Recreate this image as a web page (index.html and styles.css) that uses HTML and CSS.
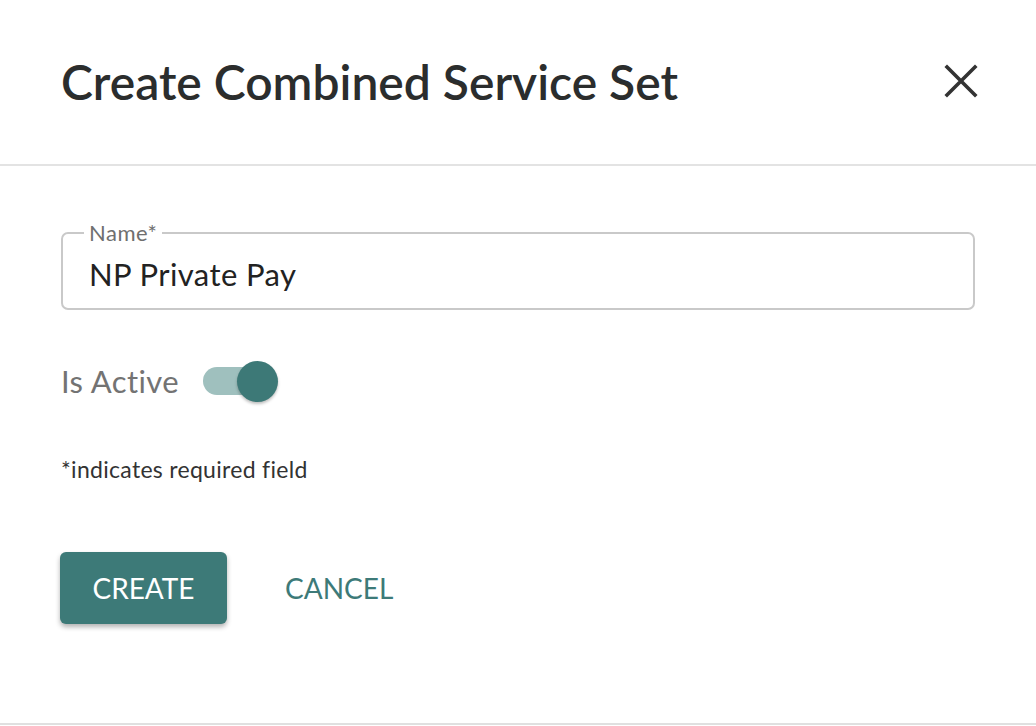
FILE: index.html
```html
<!DOCTYPE html>
<html>
<head>
<meta charset="utf-8">
<link rel="stylesheet" href="styles.css">
</head>
<body>
<div class="dialog">
  <header class="header">
    <h1 class="title">Create Combined Service Set</h1>
    <button class="close" aria-label="Close">
      <svg width="34" height="34" viewBox="0 0 34 34"><path d="M3 3 L31 31 M31 3 L3 31" stroke="#333" stroke-width="3.6" stroke-linecap="square" fill="none"/></svg>
    </button>
  </header>
  <main class="body">
    <fieldset class="field">
      <legend class="field-label">Name*</legend>
      <div class="field-value">NP Private Pay</div>
    </fieldset>
    <div class="switch-row">
      <span class="switch-label">Is Active</span>
      <span class="switch"><span class="track"></span><span class="thumb"></span></span>
    </div>
    <p class="note">*indicates required field</p>
    <div class="actions">
      <button class="btn-primary">CREATE</button>
      <button class="btn-text">CANCEL</button>
    </div>
  </main>
  <div class="footer-line"></div>
</div>
</body>
</html>
```
FILE: styles.css
```css
* { box-sizing: border-box; }
html, body { margin: 0; padding: 0; background: #fff; }
body { font-family: Lato, "Open Sans", sans-serif; width: 1036px; height: 726px; overflow: hidden; }
.dialog { display: flex; flex-direction: column; height: 726px; }
.header {
  height: 166px;
  border-bottom: 2px solid #e3e3e3;
  display: flex;
  align-items: center;
  justify-content: space-between;
  padding: 0 58px 0 61px;
}
.title {
  margin: 0;
  font-size: 48px;
  font-weight: 600;
  color: #2b2d2d;
  letter-spacing: 0;
  padding-bottom: 2px;
}
.close {
  border: 0; background: none; padding: 0; width: 34px; height: 34px; cursor: pointer;
  display: flex; margin-top: -2px;
}
.body { flex: 1; padding: 55px 61px 0 61px; }
.field {
  margin: 0;
  width: 914px;
  border: 2px solid #c9c9c9;
  border-radius: 7px;
  padding: 0 26px 15px 26px;
}
.field-label {
  font-size: 22px;
  letter-spacing: 0.5px;
  color: #6f6f6f;
  padding: 0 5px;
  margin-left: -5px;
  line-height: 24px;
}
.field-value {
  font-size: 31px;
  letter-spacing: 0.4px;
  color: #222;
  line-height: 38px;
  margin-top: 10px;
}
.switch-row { display: flex; align-items: center; margin-top: 46px; height: 50px; }
.switch-label { font-size: 31px; letter-spacing: 0.4px; color: #737373; }
.switch { position: relative; width: 74px; height: 41px; margin-left: 24px; display: inline-block; }
.track { position: absolute; left: 0; top: 6px; width: 62px; height: 28px; border-radius: 14px; background: #9fc0be; }
.thumb { position: absolute; left: 34px; top: 0; width: 41px; height: 41px; border-radius: 50%; background: #3d7977; box-shadow: 0 2px 3px rgba(0,0,0,0.25); }
.note { margin: 49px 0 0 0; font-size: 23px; letter-spacing: 0.3px; color: #333; line-height: 29px; }
.actions { display: flex; align-items: center; margin-top: 68px; }
.btn-primary {
  width: 167px; height: 72px;
  background: #3d7a78; color: #fff;
  border: 0; border-radius: 6px;
  font-family: Lato, sans-serif; font-size: 28px;
  box-shadow: 0 3px 5px rgba(0,0,0,0.3);
  margin-left: -1px;
  padding: 0;
}
.btn-text {
  margin-left: 58px; background: none; border: 0; padding: 0;
  color: #3d7a78; font-family: Lato, sans-serif; font-size: 28px;
}
.footer-line { height: 2px; background: #e0e0e0; margin-bottom: 1px; }
```
